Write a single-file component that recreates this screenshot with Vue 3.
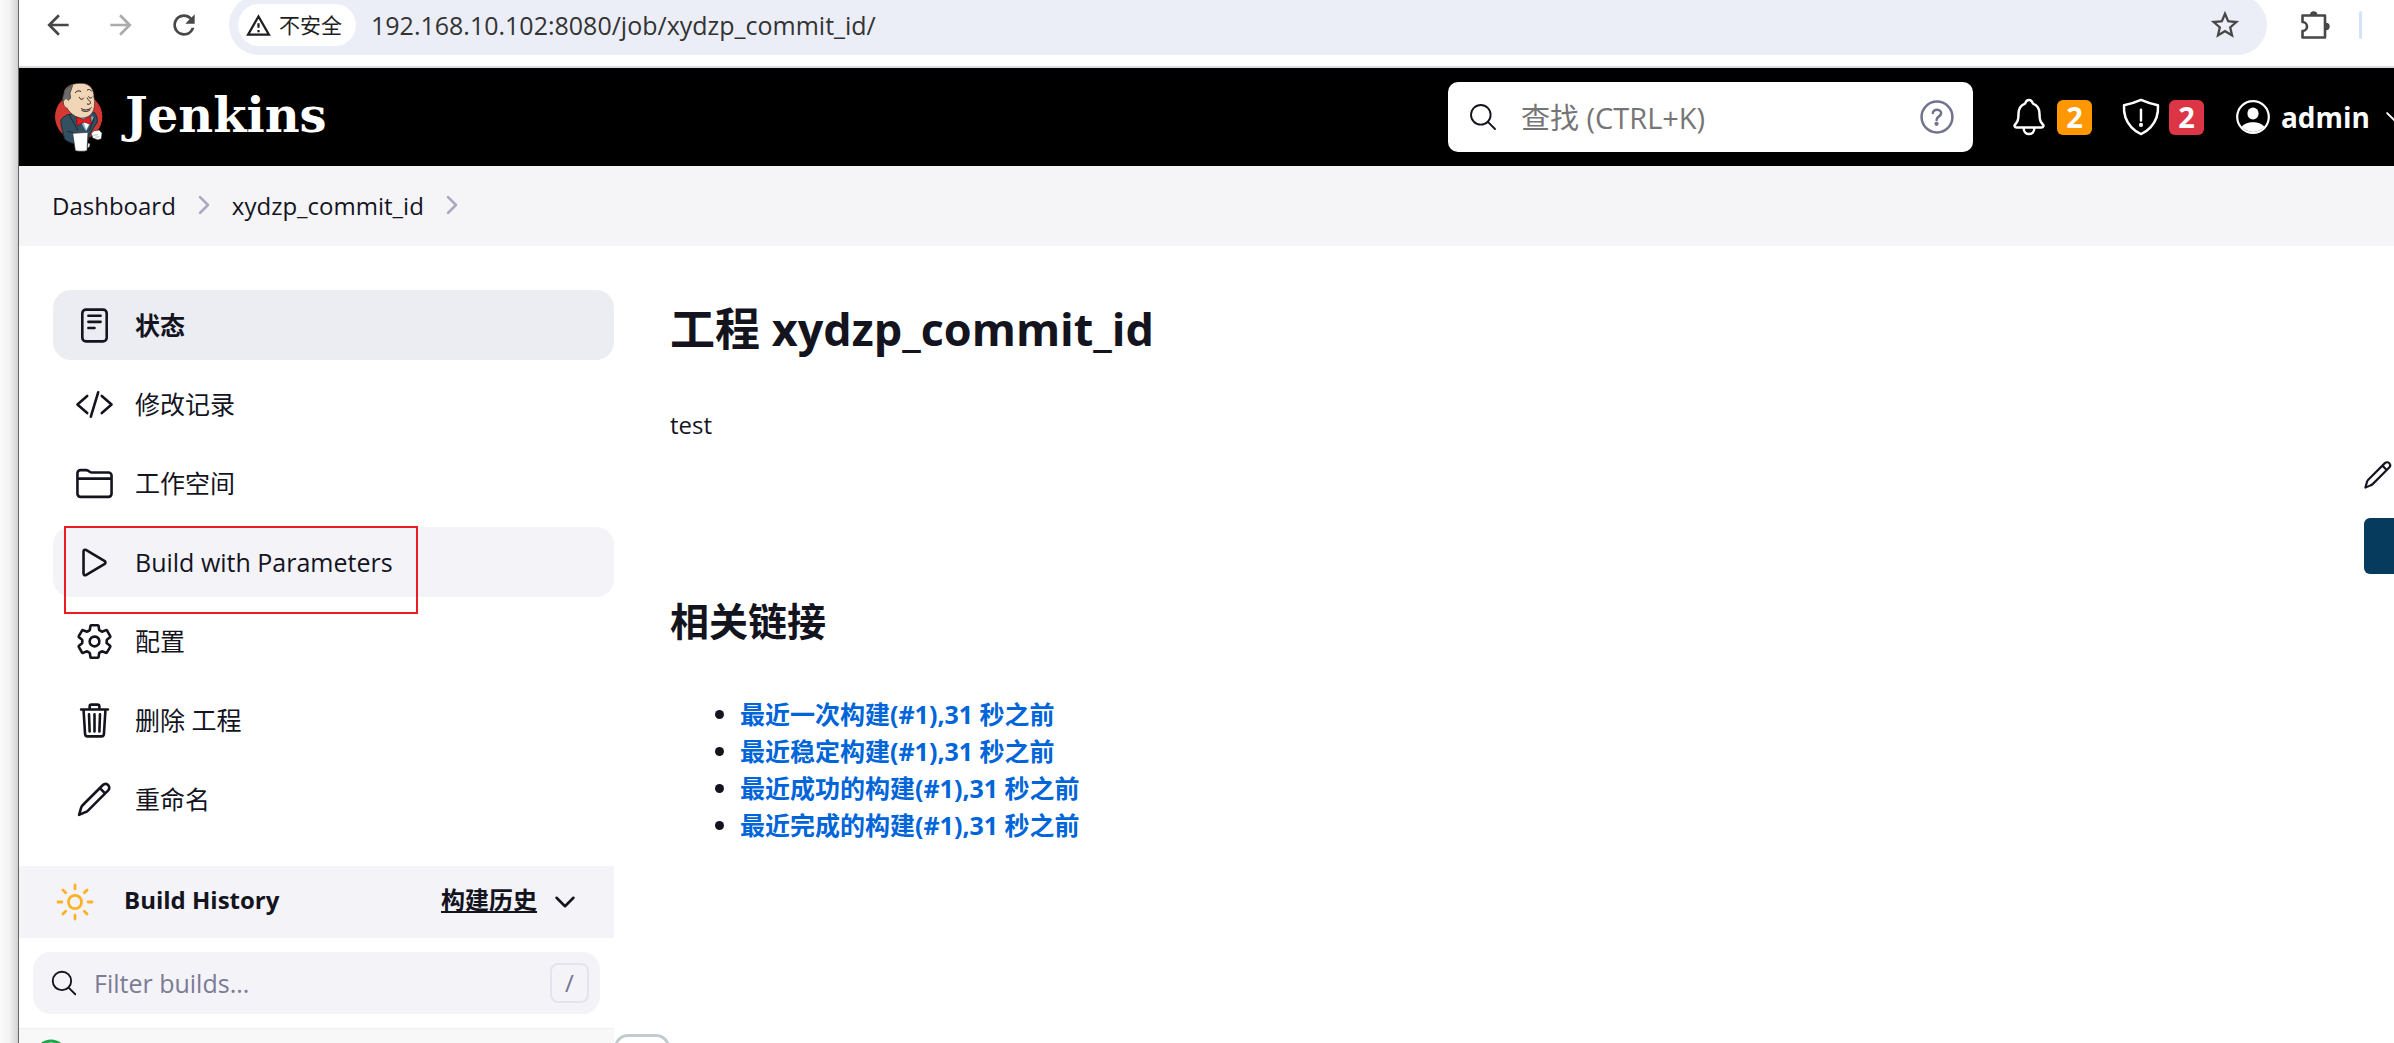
<template>
  <div class="screen">
    <div class="edge"></div>
    <div class="window">
      <div class="toolbar">
        <button class="tool" aria-label="Back">
          <svg viewBox="0 0 24 24"><path d="M20 11H7.83l5.59-5.59L12 4l-8 8 8 8 1.41-1.41L7.83 13H20v-2z" /></svg>
        </button>
        <button class="tool tool-off" aria-label="Forward" disabled>
          <svg viewBox="0 0 24 24"><path d="M4 11h12.17l-5.59-5.59L12 4l8 8-8 8-1.41-1.41L16.17 13H4v-2z" /></svg>
        </button>
        <button class="tool" aria-label="Reload">
          <svg viewBox="0 0 24 24"><path d="M17.65 6.35A7.96 7.96 0 0012 4c-4.42 0-7.99 3.58-7.99 8s3.57 8 7.99 8c3.73 0 6.84-2.55 7.73-6h-2.08A5.99 5.99 0 0112 18c-3.31 0-6-2.69-6-6s2.69-6 6-6c1.66 0 3.14.69 4.22 1.78L13 11h7V4l-2.35 2.35z" /></svg>
        </button>
        <div class="address">
          <button class="chip">
            <svg viewBox="0 0 24 24"><path d="M12 5.99L19.53 19H4.47L12 5.99M12 2L1 21h22L12 2zm1 14h-2v2h2v-2zm0-6h-2v4h2v-4z" /></svg>
            <span>不安全</span>
          </button>
          <input v-model="url" class="url" type="text" aria-label="Address">
          <button class="tool" aria-label="Bookmark">
            <svg viewBox="0 0 24 24"><path d="M22 9.24l-7.19-.62L12 2 9.19 8.63 2 9.24l5.46 4.73L5.82 21 12 17.27 18.18 21l-1.63-7.03L22 9.24zM12 15.4l-3.76 2.27 1-4.28-3.32-2.88 4.38-.38L12 6.1l1.71 4.04 4.38.38-3.32 2.88 1 4.28L12 15.4z" /></svg>
          </button>
        </div>
        <button class="tool extensions" aria-label="Extensions">
          <svg viewBox="0 0 30 30">
            <path d="M2.5 27.5V21a4.3 4.3 0 0 0 0-9V5.5H25v22z" fill="none" stroke="#474747" stroke-width="2.6" stroke-linejoin="round" />
            <path d="M10 5a3.7 3.7 0 0 1 7.4 0zM26 12.8a3.7 3.7 0 0 1 0 7.4z" />
          </svg>
        </button>
        <span class="divider"></span>
      </div>

      <header class="header">
        <a class="brand" href="#">
          <!-- butler -->
          <svg class="butler" viewBox="0 0 150 210">
            <ellipse cx="74" cy="104" rx="71" ry="70" fill="#d33833" />
            <path d="M40 98C32 104 22 108 20 116c2 20 8 40 12 56 8 6 16 10 24 12l46-10 10-26 18-28c0-12-2-20-8-28z" fill="#335061" stroke="#1b2a36" stroke-width="3" />
            <path d="M70 104l26 44 24-42-18-8z" fill="#81b0c4" />
            <path d="M88 120l9 24 12-26z" fill="#fff" />
            <path d="M44 96l28 50M122 104l-16 42M40 148l18 4" stroke="#1b2a36" stroke-width="3" fill="none" />
            <path d="M30 28C40 8 62 3 84 4c24 1 36 18 36 42 4 16 2 38-8 50-12 12-30 16-46 8C52 96 42 86 38 76 26 70 26 52 34 48z" fill="#f0d6b7" stroke="#3a2b23" stroke-width="2" />
            <path d="M56 10C40 14 28 28 26 50c0 10 2 16 6 18l10-12 8-8-2-14z" fill="#6d6b6d" stroke="#2b2b2b" stroke-width="2" />
            <path d="M38 52c-12 0-12 20 2 26l10-14z" fill="#f0d6b7" />
            <path d="M64 32c4-6 10-7 16-4M100 24c5-3 10-2 12 3M76 46c2 7 9 8 13 2M104 44c1 5 7 6 11 1M100 48c2 8 12 10 9 16-2 4-6 3-9 2M82 80c10 6 22 5 30-3M84 86c10 4 18 3 24-2" fill="none" stroke="#2b1d17" stroke-width="3" stroke-linecap="round" />
            <path d="M66 104l22 9 22-11 2 26-22-8-20 12z" fill="#e31b23" stroke="#5a1216" stroke-width="2" />
            <path d="M56 154l46-3-3 55c-12 3-24 2-35 0z" fill="#fff" stroke="#2b2b2b" stroke-width="2" />
            <path d="M112 154l8-8 16-2 8 10-2 16-10 4-16-6z" fill="#fff" stroke="#2b2b2b" stroke-width="2" />
            <path d="M118 160l14-2M124 166l12-2" stroke="#999" stroke-width="2" />
            <path d="M102 184l6 1-2 10-5 2z" fill="#ddd" />
          </svg>
          <span class="brand-name">Jenkins</span>
        </a>
        <label class="search">
          <svg class="icon search-icon" viewBox="0 0 512 512"><path :d="icons.search" /></svg>
          <input v-model="query" type="text" placeholder="查找 (CTRL+K)" aria-label="查找">
          <svg class="icon help" viewBox="0 0 512 512">
            <circle cx="256" cy="256" r="208" />
            <path d="M200 202.29s.84-17.5 19.57-32.57C230.68 160.77 244 158.18 256 158c10.93-.14 20.69 1.67 26.53 4.45 10 4.76 29.47 16.38 29.47 41.09 0 26-17 37.81-36.37 50.8S251 281.43 251 296" />
            <circle class="solid" cx="250" cy="348" r="12" />
          </svg>
        </label>
        <a class="alert" href="#" aria-label="Notifications">
          <svg class="icon" viewBox="0 0 512 512"><path :d="icons.bell" /></svg>
          <span class="badge">2</span>
        </a>
        <a class="alert" href="#" aria-label="Security warnings">
          <svg class="icon" viewBox="0 0 512 512">
            <path :d="icons.shield" />
            <circle class="solid" cx="256" cy="352" r="10" />
          </svg>
          <span class="badge badge-red">2</span>
        </a>
        <a class="user" href="#">
          <svg viewBox="0 0 34 34">
            <circle cx="17" cy="17" r="15.8" fill="none" stroke="#fff" stroke-width="2.2" />
            <ellipse cx="17" cy="13.5" rx="5.6" ry="6" fill="#fff" />
            <path d="M5.5 27C9 20.5 25 20.5 28.5 27A16 16 0 0 1 5.5 27z" fill="#fff" />
          </svg>
          <span>admin</span>
          <svg class="icon caret" viewBox="0 0 512 512"><path :d="icons.down" /></svg>
        </a>
      </header>

      <nav class="crumbs">
        <template v-for="crumb in crumbs" :key="crumb">
          <a href="#">{{ crumb }}</a>
          <svg class="icon" viewBox="0 0 512 512"><path :d="icons.forward" /></svg>
        </template>
      </nav>

      <div class="page">
        <aside class="side">
          <nav class="tasks">
            <a v-for="task in tasks" :key="task.label" class="task" :class="task.state" href="#">
              <svg class="icon" viewBox="0 0 512 512"><path :d="icons[task.icon]" /></svg>
              <span>{{ task.label }}</span>
              <span v-if="task.marked" class="mark"></span>
            </a>
          </nav>

          <section class="history">
            <div class="history-head">
              <svg class="icon sun" viewBox="0 0 512 512">
                <path :d="icons.sun" />
                <circle cx="256" cy="256" r="80" />
              </svg>
              <h2>Build History</h2>
              <a href="#">构建历史</a>
              <svg class="icon caret" viewBox="0 0 512 512"><path :d="icons.down" /></svg>
            </div>
            <label class="filter">
              <svg class="icon" viewBox="0 0 512 512"><path :d="icons.search" /></svg>
              <input v-model="filter" type="text" placeholder="Filter builds..." aria-label="Filter builds">
              <kbd>/</kbd>
            </label>
            <div class="build">
              <svg viewBox="0 0 34 34"><circle cx="17" cy="17" r="15" fill="none" stroke="#1ea64b" stroke-width="3" /></svg>
              <button class="build-more" aria-label="Build menu"></button>
            </div>
          </section>
        </aside>

        <main class="main">
          <h1>工程 xydzp_commit_id</h1>
          <p>test</p>
          <h2>相关链接</h2>
          <ul>
            <li v-for="link in links" :key="link"><a href="#">{{ link }}</a></li>
          </ul>
        </main>

        <div class="actions">
          <a href="#" aria-label="Edit description">
            <svg class="icon" viewBox="0 0 512 512"><path :d="icons.pencil" /></svg>
          </a>
          <button class="disable" aria-label="Disable project"></button>
        </div>
      </div>
    </div>
  </div>
</template>

<script setup>
import { ref } from 'vue'

const url = ref('192.168.10.102:8080/job/xydzp_commit_id/')
const query = ref('')
const filter = ref('')

const crumbs = ['Dashboard', 'xydzp_commit_id']

const tasks = [
  { label: '状态', icon: 'reader', state: 'active' },
  { label: '修改记录', icon: 'code' },
  { label: '工作空间', icon: 'folder' },
  { label: 'Build with Parameters', icon: 'play', state: 'hover', marked: true },
  { label: '配置', icon: 'settings' },
  { label: '删除 工程', icon: 'trash' },
  { label: '重命名', icon: 'pencil' },
]

const links = [
  '最近一次构建(#1),31 秒之前',
  '最近稳定构建(#1),31 秒之前',
  '最近成功的构建(#1),31 秒之前',
  '最近完成的构建(#1),31 秒之前',
]

// stroked outlines on a 512 grid
const icons = {
  reader: 'M144 48h224a48 48 0 0148 48v320a48 48 0 01-48 48H144a48 48 0 01-48-48V96a48 48 0 0148-48zM176 128h160M176 208h160M176 288h80',
  code: 'M160 368L32 256l128-112M352 368l128-112-128-112M304 96l-96 320',
  folder: 'M440 432H72a40 40 0 01-40-40V120a40 40 0 0140-40h75.89a40 40 0 0122.19 6.72l27.84 18.56a40 40 0 0022.19 6.72H440a40 40 0 0140 40v240a40 40 0 01-40 40zM32 192h448',
  play: 'M112 111v290c0 17.44 17 28.52 31 20.16l247.9-148.37c12.12-7.25 12.12-26.33 0-33.58L143 90.84c-14-8.36-31 2.72-31 20.16z',
  settings: 'M262.29 192.31a64 64 0 1057.4 57.4 64.13 64.13 0 00-57.4-57.4zM416.39 256a154.34 154.34 0 01-1.53 20.79l45.21 35.46a10.81 10.81 0 012.45 13.75l-42.77 74a10.81 10.81 0 01-13.14 4.59l-44.9-18.08a16.11 16.11 0 00-15.17 1.75A164.48 164.48 0 01325 400.8a15.94 15.94 0 00-8.82 12.14l-6.73 47.89a11.08 11.08 0 01-10.68 9.17h-85.54a11.11 11.11 0 01-10.69-8.87l-6.72-47.82a16.07 16.07 0 00-9-12.22 155.3 155.3 0 01-21.46-12.57 16 16 0 00-15.11-1.71l-44.89 18.07a10.81 10.81 0 01-13.14-4.58l-42.77-74a10.8 10.8 0 012.45-13.75l38.21-30a16.05 16.05 0 006-14.08c-.36-4.17-.58-8.33-.58-12.5s.21-8.27.58-12.35a16 16 0 00-6.07-13.94l-38.19-30A10.81 10.81 0 0149.48 186l42.77-74a10.81 10.81 0 0113.14-4.59l44.9 18.08a16.11 16.11 0 0015.17-1.75A164.48 164.48 0 01187 111.2a15.94 15.94 0 008.82-12.14l6.73-47.89A11.08 11.08 0 01213.23 42h85.54a11.11 11.11 0 0110.69 8.87l6.72 47.82a16.07 16.07 0 009 12.22 155.3 155.3 0 0121.46 12.57 16 16 0 0015.11 1.71l44.89-18.07a10.81 10.81 0 0113.14 4.58l42.77 74a10.8 10.8 0 01-2.45 13.75l-38.21 30a16.05 16.05 0 00-6.05 14.08c.33 4.14.55 8.3.55 12.47z',
  trash: 'M112 112l20 320c.95 18.49 14.4 32 32 32h184c17.67 0 30.87-13.51 32-32l20-320M80 112h352M192 112V72a24 24 0 0124-24h80a24 24 0 0124 24v40M256 176v224M184 176l8 224M328 176l-8 224',
  pencil: 'M54 458l26-92c4-14 10-24 20-34L366 66c20-20 52-20 70 0s20 50 0 70L170 402c-10 10-20 16-34 20zM326 106l70 70',
  search: 'M221.09 64a157.09 157.09 0 10157.09 157.09A157.1 157.1 0 00221.09 64zM338.29 338.29L448 448',
  bell: 'M427.68 351.43C402 320 383.87 304 383.87 217.35 383.87 138 343.35 109.73 310 96c-4.43-1.82-8.6-6-9.95-10.55C294.2 65.54 277.8 48 256 48s-38.21 17.55-44 37.47c-1.35 4.6-5.52 8.71-9.95 10.53-33.39 13.75-73.87 41.92-73.87 121.35C128.13 304 110 320 84.32 351.43 73.68 364.45 83 384 101.61 384h308.88c18.51 0 27.77-19.61 17.19-32.57zM320 384v16a64 64 0 01-128 0v-16',
  shield: 'M463.1 112.37C373.68 96.33 336.71 84.45 256 48c-80.71 36.45-117.68 48.33-207.1 64.37C32.7 369.13 240.58 457.79 256 464c15.42-6.21 223.3-94.87 207.1-351.63zM256 166v134',
  sun: 'M256 48v48M256 416v48M403.08 108.92l-33.94 33.94M142.86 369.14l-33.94 33.94M464 256h-48M96 256H48M403.08 403.08l-33.94-33.94M142.86 142.86l-33.94-33.94',
  down: 'M112 184l144 144 144-144',
  forward: 'M184 112l144 144-144 144',
}
</script>

<style>
body {
  margin: 0;
  background: #fff;
}
</style>

<style scoped>
.screen {
  display: flex;
  height: 100vh;
  overflow: hidden;
  color: #14141f;
  font: 25px/37px "Open Sans", "Noto Sans CJK SC", sans-serif;
}
.screen *, .screen { box-sizing: border-box; }
a { color: inherit; text-decoration: none; }
button { padding: 0; border: 0; background: none; font: inherit; color: inherit; }
input {
  flex: 1;
  min-width: 0;
  padding: 0;
  border: 0;
  outline: 0;
  background: none;
  font: inherit;
}
svg { display: block; flex: none; }
h1, h2, p, ul { margin: 0; }

.edge {
  width: 19px;
  flex: none;
  border-right: 1px solid #666;
  background: linear-gradient(to right, #fafafa, #f3f3f3 50%, #d2d2d2);
}
.window {
  flex: 1;
  min-width: 0;
  overflow: hidden;
}

.icon {
  width: 39px;
  height: 39px;
  fill: none;
  stroke: currentColor;
  stroke-width: 34;
  stroke-linecap: round;
  stroke-linejoin: round;
}
.icon .solid { fill: currentColor; }

/* browser chrome */
.toolbar {
  display: flex;
  align-items: center;
  height: 68px;
  padding: 0 32px 16px 23px;
  border-bottom: 2px solid #d9dbde;
  fill: #474747;
}
.tool { margin-right: 31px; }
.tool svg { width: 32px; height: 32px; }
.tool-off { opacity: 0.45; }
.address {
  display: flex;
  flex: 1;
  align-items: center;
  height: 60px;
  margin-left: -2px;
  padding: 0 25px 0 9px;
  border-radius: 30px;
  background: #ebeef7;
}
.address .tool { margin: 0; }
.address .tool svg { width: 34px; height: 34px; }
.chip {
  display: flex;
  align-items: center;
  gap: 7px;
  height: 42px;
  margin-right: 15px;
  padding: 0 14px 0 7px;
  border-radius: 21px;
  background: #fff;
  color: #1f1f1f;
  font-size: 21px;
  fill: #1f1f1f;
}
.chip svg { width: 27px; height: 27px; }
.url { color: #333; }
.extensions { margin: 0 29px 0 33px; }
.extensions svg { width: 30px; height: 30px; }
.divider {
  width: 3px;
  height: 28px;
  border-radius: 2px;
  background: #d3e3fd;
}

/* jenkins header */
.header {
  display: flex;
  align-items: center;
  height: 98px;
  margin-right: -15px;
  padding-left: 35px;
  background: #000;
  color: #fff;
}
.brand {
  display: flex;
  align-items: center;
  gap: 21px;
  margin-right: auto;
}
.butler { width: 50px; height: 70px; }
.brand-name {
  padding-bottom: 4px;
  font: bold 48px/60px "DejaVu Serif", serif;
}
.search {
  display: flex;
  align-items: center;
  width: 525px;
  height: 70px;
  margin-right: 35px;
  padding: 0 17px 0 19px;
  border-radius: 10px;
  background: #fff;
  color: #14141f;
  font-size: 29px;
}
.search input::placeholder { color: #757575; }
.search-icon { width: 32px; height: 32px; margin-right: 22px; stroke-width: 30; }
.help { width: 38px; height: 38px; color: #73738c; }
.alert {
  display: flex;
  align-items: center;
  gap: 7px;
  margin-right: 28px;
}
.alert .icon { width: 42px; height: 42px; stroke-width: 30; }
.badge {
  width: 35px;
  height: 35px;
  border-radius: 6px;
  background: #ff9800;
  font-size: 29px;
  font-weight: bold;
  line-height: 34px;
  text-align: center;
}
.badge-red { background: #dc3545; }
.user {
  display: flex;
  align-items: center;
  gap: 11px;
  margin-left: 4px;
  font-size: 28px;
  font-weight: bold;
}
.user svg { width: 34px; height: 34px; }
.user .caret { width: 28px; height: 28px; }

.crumbs {
  display: flex;
  align-items: center;
  gap: 14px;
  height: 80px;
  padding: 0 0 2px 33px;
  background: #f5f5f8;
  font-size: 24px;
}
.crumbs .icon { width: 28px; height: 28px; color: #a9a9c0; stroke-width: 48; }

/* job page */
.page { display: flex; }
.side {
  width: 595px;
  flex: none;
  padding-top: 44px;
}
.tasks {
  display: flex;
  flex-direction: column;
  gap: 9px;
  padding-left: 34px;
}
.task {
  position: relative;
  display: flex;
  align-items: center;
  gap: 21px;
  height: 70px;
  padding-left: 22px;
  border-radius: 18px;
}
.active { background: #ecedf3; font-weight: bold; }
.hover { background: #f3f3f8; }
.mark {
  position: absolute;
  top: -1px;
  left: 11px;
  width: 354px;
  height: 88px;
  border: 2px solid #ed1c24;
}

.history { margin-top: 32px; }
.history-head {
  display: flex;
  align-items: center;
  height: 72px;
  padding: 0 34px 0 35px;
  background: #f3f3f8;
  font-size: 24px;
  font-weight: bold;
}
.sun { width: 42px; height: 42px; color: #ffb126; }
.history-head h2 {
  flex: 1;
  margin-left: 28px;
  padding-bottom: 6px;
  font-size: 24px;
}
.history-head a {
  padding-bottom: 6px;
  text-decoration: underline;
}
.history-head .caret { width: 30px; height: 30px; margin-left: 13px; stroke-width: 44; }
.filter {
  display: flex;
  align-items: center;
  height: 62px;
  margin: 14px;
  padding: 0 11px 0 16px;
  border-radius: 18px;
  background: #f3f3f8;
}
.filter .icon { width: 30px; height: 30px; margin-right: 15px; stroke-width: 32; }
.filter input::placeholder { color: #7b7b94; }
.filter kbd {
  width: 39px;
  height: 40px;
  border: 2px solid #e4e4ef;
  border-radius: 8px;
  color: #73738c;
  font: 24px/36px "Open Sans", sans-serif;
  text-align: center;
}
.build {
  position: relative;
  height: 70px;
  padding: 10px 15px;
  border-top: 1px solid #f0f0f0;
  background: #f8f8f8;
}
.build svg { width: 34px; height: 34px; }
.build-more {
  position: absolute;
  top: 5px;
  left: 100%;
  width: 56px;
  height: 56px;
  border: 3px solid #c1cbd0;
  border-radius: 14px;
  background: #fff;
}

.main {
  flex: 1;
  padding: 50px 0 0 56px;
}
h1 { font-size: 45px; line-height: 66px; }
.main p {
  margin: 44px 0 149px;
  font-size: 24px;
}
.main h2 { font-size: 39px; line-height: 58px; }
.main ul {
  margin-top: 46px;
  padding-left: 70px;
}
.main li a {
  color: #0065d9;
  font-weight: bold;
}

.actions {
  width: 36px;
  flex: none;
  padding-top: 213px;
}
.actions .icon { width: 32px; height: 32px; margin-left: 4px; }
.disable {
  width: 60px;
  height: 56px;
  margin: 27px 0 0 6px;
  border-radius: 6px;
  background: #073b5e;
}
</style>
